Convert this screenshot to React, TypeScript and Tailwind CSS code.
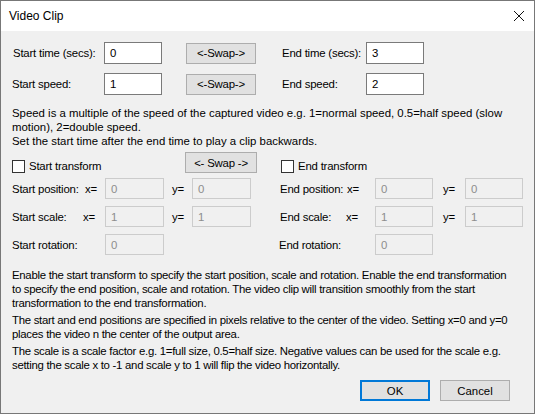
import React from "react";

const font = { fontFamily: '"Liberation Sans", Arial, sans-serif' };

function TextBox({ value, disabled = false, w = "w-[58px]", h = "h-[21px]" }: { value: string; disabled?: boolean; w?: string; h?: string }) {
  return (
    <div
      className={`${w} ${h} flex shrink-0 items-center border px-[5px] ${
        disabled ? "border-[#cccccc] bg-[#f0f0f0] text-[#8d8d8d]" : "border-[#7a7a7a] bg-white text-black"
      }`}
    >
      {value}
    </div>
  );
}

function Button({ label, w = "w-[70px]", primary = false }: { label: string; w?: string; primary?: boolean }) {
  return (
    <button
      type="button"
      className={`${w} flex h-[21px] shrink-0 items-center justify-center bg-[#e1e1e1] text-black ${
        primary ? "border-2 border-[#0078d7]" : "border border-[#adadad]"
      }`}
    >
      {label}
    </button>
  );
}

function Check({ label }: { label: string }) {
  return (
    <label className="mt-[7px] flex items-center gap-[4px]">
      <span className="h-[13px] w-[13px] border border-[#333333] bg-white" />
      {label}
    </label>
  );
}

export default function App() {
  return (
    <div
      className="flex h-[414px] w-[535px] flex-col overflow-hidden whitespace-nowrap border border-[#777777] bg-[#f0f0f0] text-[11.4px] leading-[14px] tracking-[-0.2px] text-black"
      style={font}
    >
      <div className="flex h-[30px] shrink-0 items-center justify-between bg-white pl-[8px] pr-[9px]">
        <span className="text-[12px] tracking-normal">Video Clip</span>
        <svg width="12" height="12" viewBox="0 0 12 12">
          <path d="M1 1 L11 11 M11 1 L1 11" stroke="#111" strokeWidth="1" />
        </svg>
      </div>

      <div className="flex flex-col pl-[11px] pt-[11px]">
        <div className="flex items-center">
          <span className="w-[92px] pl-[1px]">Start time (secs):</span>
          <TextBox value="0" h="h-[22px]" />
          <div className="ml-[24px]">
            <Button label="<-Swap->" />
          </div>
          <span className="ml-[26px] w-[84px]">End time (secs):</span>
          <TextBox value="3" h="h-[22px]" />
        </div>
        <div className="mt-[9px] flex items-center">
          <span className="w-[92px]">Start speed:</span>
          <TextBox value="1" h="h-[22px]" />
          <div className="ml-[24px]">
            <Button label="<-Swap->" />
          </div>
          <span className="ml-[26px] w-[84px]">End speed:</span>
          <TextBox value="2" h="h-[22px]" />
        </div>

        <div className="mt-[11px] tracking-normal">
          <p>Speed is a multiple of the speed of the captured video e.g. 1=normal speed, 0.5=half speed (slow</p>
          <p>motion), 2=double speed.</p>
          <p>Set the start time after the end time to play a clip backwards.</p>
        </div>

        <div className="mt-[4px] flex">
          <div className="flex w-[268px] flex-col">
            <div className="flex w-[245px] items-start justify-between">
              <Check label="Start transform" />
              <Button label="<- Swap ->" w="w-[72px]" />
            </div>
            <div className="mt-[5px] flex items-center">
              <span className="w-[73px]">Start position:</span>
              <span className="w-[20px]">x=</span>
              <TextBox value="0" disabled w="w-[59px]" />
              <span className="ml-[8px] w-[20px]">y=</span>
              <TextBox value="0" disabled w="w-[59px]" />
            </div>
            <div className="mt-[7px] flex items-center">
              <span className="w-[71px]">Start scale:</span>
              <span className="w-[22px]">x=</span>
              <TextBox value="1" disabled w="w-[59px]" />
              <span className="ml-[8px] w-[20px]">y=</span>
              <TextBox value="1" disabled w="w-[59px]" />
            </div>
            <div className="mt-[7px] flex items-center">
              <span className="w-[93px]">Start rotation:</span>
              <TextBox value="0" disabled w="w-[59px]" />
            </div>
          </div>

          <div className="flex flex-col">
            <div className="flex h-[21px] items-start pl-[1px]">
              <Check label="End transform" />
            </div>
            <div className="mt-[5px] flex items-center">
              <span className="w-[67px]">End position:</span>
              <span className="w-[28px]">x=</span>
              <TextBox value="0" disabled />
              <span className="ml-[10px] w-[22px]">y=</span>
              <TextBox value="0" disabled />
            </div>
            <div className="mt-[7px] flex items-center">
              <span className="w-[66px]">End scale:</span>
              <span className="w-[29px]">x=</span>
              <TextBox value="1" disabled />
              <span className="ml-[10px] w-[22px]">y=</span>
              <TextBox value="1" disabled />
            </div>
            <div className="mt-[7px] flex items-center">
              <span className="-ml-[1px] w-[96px]">End rotation:</span>
              <TextBox value="0" disabled />
            </div>
          </div>
        </div>

        <div className="mt-[13px] flex flex-col gap-[3px] tracking-[-0.28px]">
          <div>
            <p>Enable the start transform to specify the start position, scale and rotation. Enable the end transformation</p>
            <p>to specify the end position, scale and rotation. The video clip will transition smoothly from the start</p>
            <p>transformation to the end transformation.</p>
          </div>
          <div>
            <p>The start and end positions are specified in pixels relative to the center of the video. Setting x=0 and y=0</p>
            <p>places the video n the center of the output area.</p>
          </div>
          <div>
            <p>The scale is a scale factor e.g. 1=full size, 0.5=half size. Negative values can be used for the scale e.g.</p>
            <p>setting the scale x to -1 and scale y to 1 will flip the video horizontally.</p>
          </div>
        </div>
      </div>

      <div className="mt-auto flex justify-end gap-[10px] pb-[12px] pr-[24px] tracking-normal">
        <Button label="OK" primary />
        <Button label="Cancel" />
      </div>
    </div>
  );
}
